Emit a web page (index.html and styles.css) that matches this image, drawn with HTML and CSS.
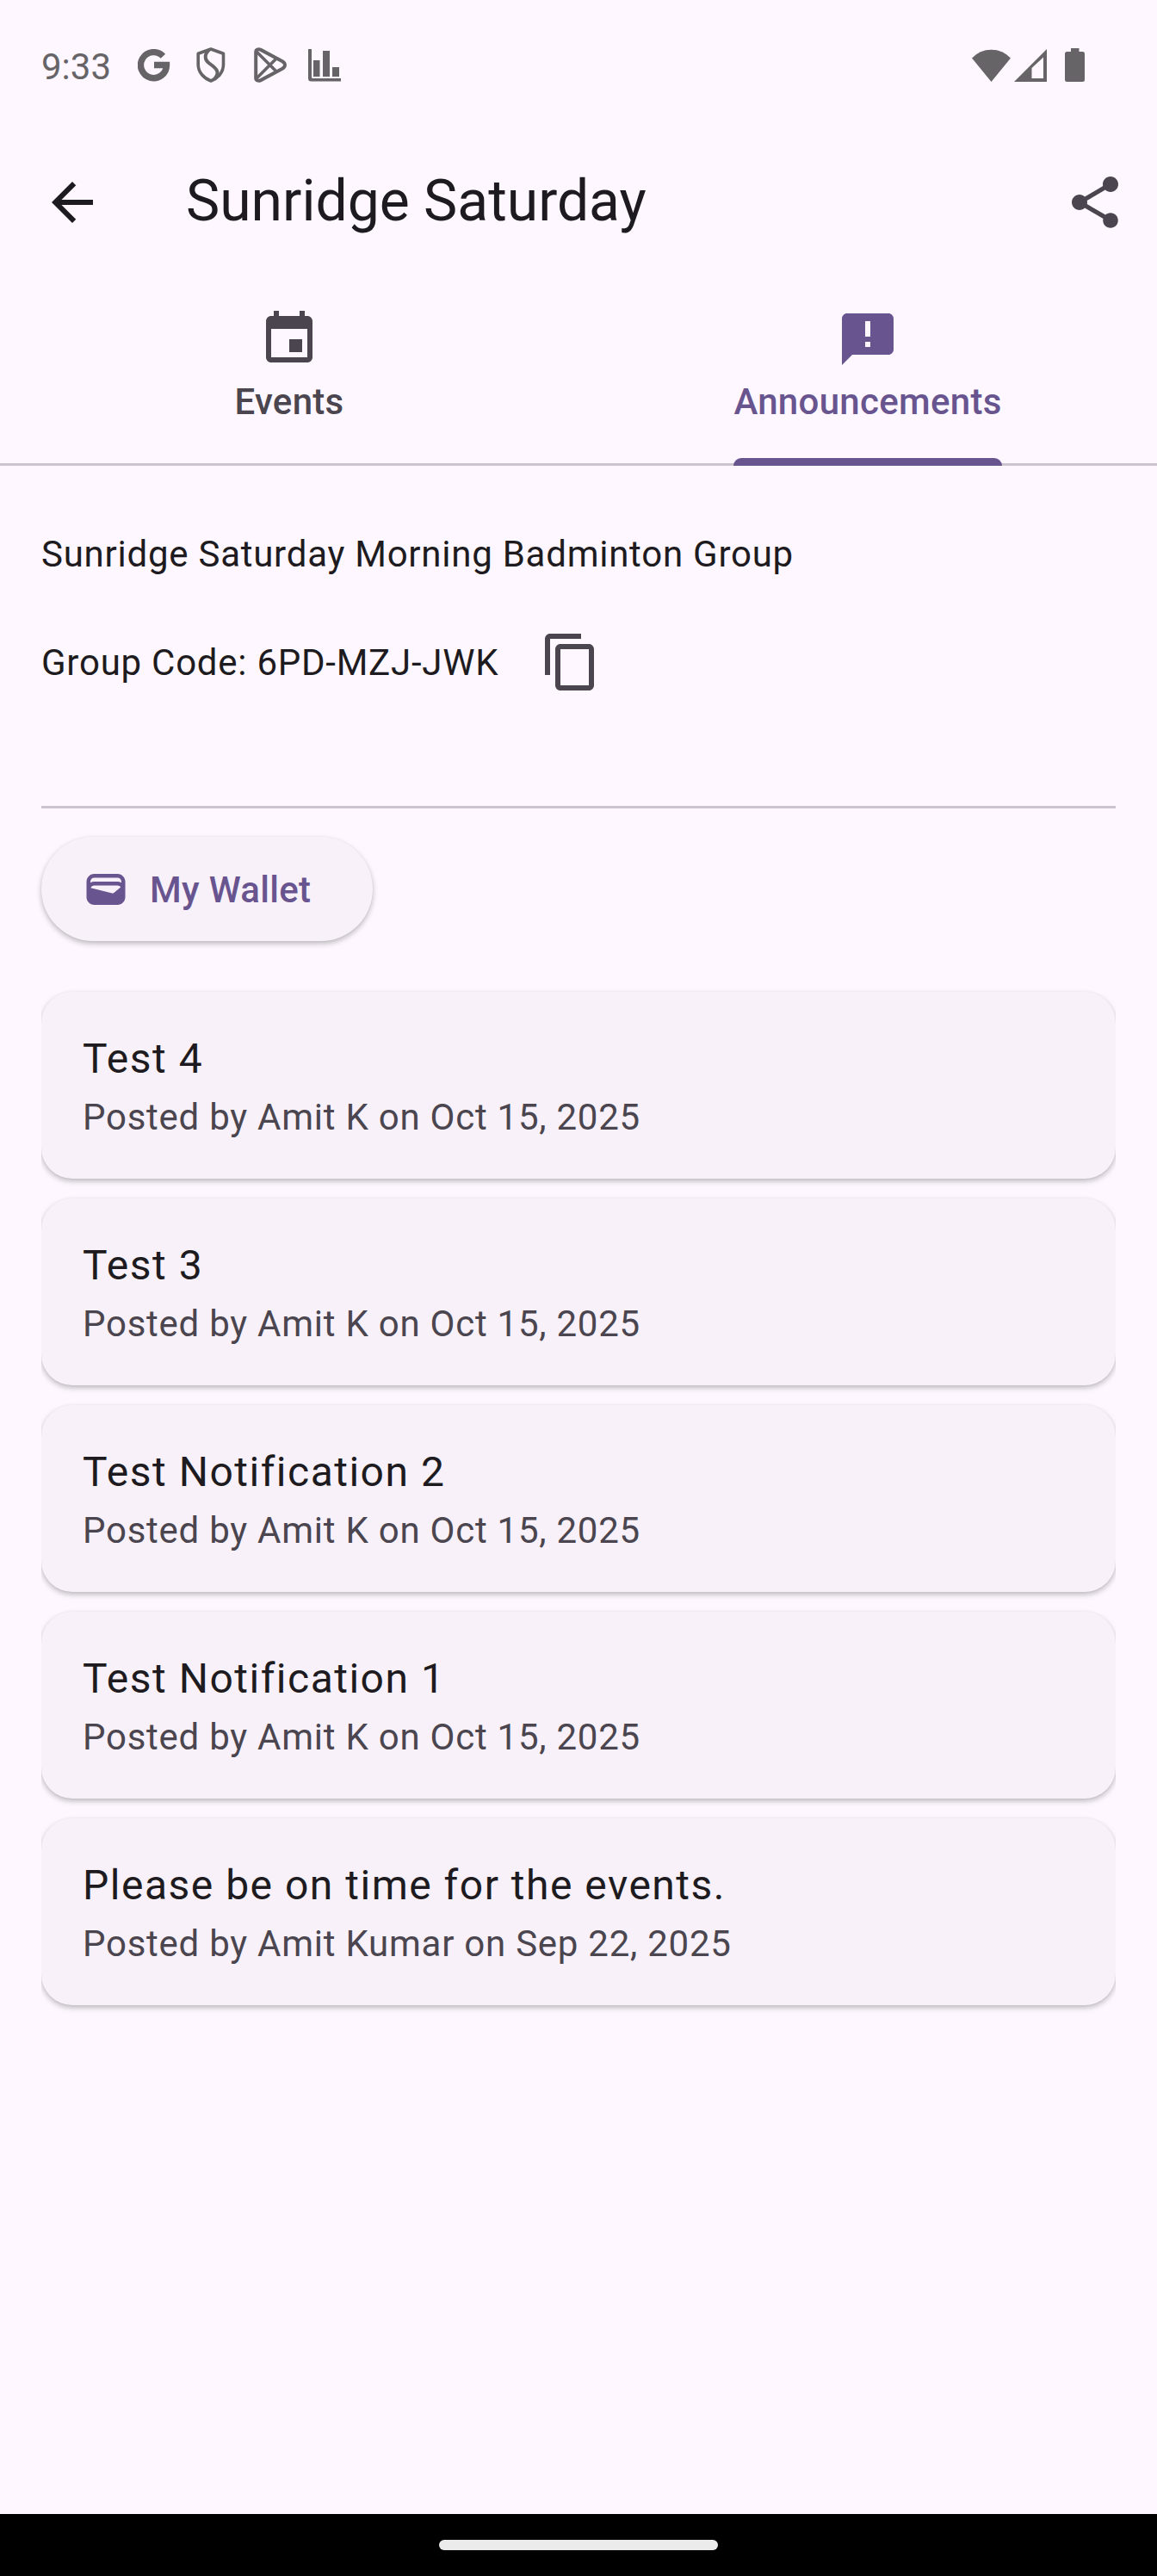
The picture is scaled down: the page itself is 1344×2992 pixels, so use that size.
FILE: index.html
```html
<!DOCTYPE html>
<html lang="en">
<head>
<meta charset="utf-8">
<title>Sunridge Saturday</title>
<link rel="stylesheet" href="styles.css">
</head>
<body>
<div class="screen">
  <header class="status-bar">
    <span class="clock">9:33</span>
    <div class="notifications">
      <svg class="glyph google" viewBox="0 0 38 38"><path d="M29.400 8.300A15 15 0 1 0 33.500 18.500H19" fill="none" stroke="currentColor" stroke-width="7.400"/></svg>
      <svg class="glyph shield" viewBox="0 0 34 41"><path d="M17 2 31.500 7.300V20C31.500 29 25 36 17 39 9 36 2.200 29 2.200 20V7.300Z" fill="none" stroke="currentColor" stroke-width="3.600" stroke-linejoin="round"/><path d="M15 3C9 8 9.500 14.500 15 18.500L19 21.500C26 27 26 31 21 37" fill="none" stroke="currentColor" stroke-width="4"/></svg>
      <svg class="glyph play" viewBox="0 0 38 41"><path d="M2.200 5.500C2.200 2.500 5 1.400 8 2.900L33 16.300C37 18.600 37 22.400 33 24.700L8 38.100C5 39.600 2.200 38.500 2.200 35.500Z" fill="none" stroke="currentColor" stroke-width="4"/><path d="M3 5 26.500 28.500M3 36 26.500 12.500" fill="none" stroke="currentColor" stroke-width="3.600"/></svg>
      <svg class="glyph chart" viewBox="0 0 38 38"><path d="M0 0H4V32.500Q4 34 5.500 34H38V37.500H3.500Q0 37.500 0 34ZM6 13H13.500V32H6ZM17 2H25V32H17ZM28 21H36V32H28Z" fill="currentColor"/></svg>
    </div>
    <div class="system">
      <svg class="glyph wifi" viewBox="0 0 45 38"><path d="M0 10.500Q9 .7 22.500 .7T45 10.500L22.500 38Z" fill="currentColor"/></svg>
      <svg class="glyph signal" viewBox="0 0 38 38"><path d="M38 0V38H0ZM34 9.500 20.500 22V34H34Z" fill="currentColor" fill-rule="evenodd"/></svg>
      <svg class="glyph battery" viewBox="0 0 23 39"><path d="M7 0H16.500V4H20.500Q23 4 23 6.500V36.500Q23 39 20.500 39H2.500Q0 39 0 36.500V6.500Q0 4 2.500 4H7Z" fill="currentColor"/></svg>
    </div>
  </header>

  <div class="app-bar">
    <svg class="icon back" viewBox="0 0 24 24"><path d="M20 11H7.830l5.590-5.590L12 4l-8 8 8 8 1.410-1.410L7.830 13H20v-2z"/></svg>
    <h1 class="title">Sunridge Saturday</h1>
    <svg class="icon share" viewBox="0 0 24 24"><path d="M18 16.080c-.76 0-1.440.3-1.960.77L8.910 12.700c.05-.23.09-.46.09-.7s-.04-.47-.09-.7l7.050-4.110c.54.5 1.250.81 2.040.81 1.660 0 3-1.340 3-3s-1.340-3-3-3-3 1.340-3 3c0 .24.04.47.09.7L8.040 9.810C7.500 9.310 6.790 9 6 9c-1.660 0-3 1.340-3 3s1.340 3 3 3c.79 0 1.500-.31 2.040-.81l7.120 4.160c-.05.21-.08.43-.08.65 0 1.610 1.310 2.920 2.920 2.920s2.920-1.310 2.920-2.920-1.310-2.920-2.920-2.920z"/></svg>
  </div>

  <nav class="tabs">
    <div class="tab">
      <svg class="icon" viewBox="0 0 24 24"><path d="M17 12h-5v5h5v-5zM16 1v2H8V1H6v2H5c-1.110 0-1.990.9-1.990 2L3 19c0 1.100.89 2 2 2h14c1.100 0 2-.9 2-2V5c0-1.100-.9-2-2-2h-1V1h-2zm3 18H5V8h14v11z"/></svg>
      <span class="tab-label">Events</span>
    </div>
    <div class="tab tab-active">
      <svg class="icon" viewBox="0 0 24 24"><path d="M20 2H4c-1.100 0-1.990.9-1.990 2L2 22l4-4h14c1.100 0 2-.9 2-2V4c0-1.100-.9-2-2-2zm-7 9h-2V5h2v6zm0 4h-2v-2h2v2z"/></svg>
      <span class="tab-label">Announcements</span>
    </div>
  </nav>

  <main class="content">
    <p class="group-name">Sunridge Saturday Morning Badminton Group</p>
    <div class="group-code">
      <span class="code-text">Group Code: 6PD-MZJ-JWK</span>
      <svg class="icon copy" viewBox="0 0 24 24"><path d="M16 1H4c-1.100 0-2 .9-2 2v14h2V3h12V1zm3 4H8c-1.100 0-2 .9-2 2v14c0 1.100.9 2 2 2h11c1.100 0 2-.9 2-2V7c0-1.100-.9-2-2-2zm0 16H8V7h11v14z"/></svg>
    </div>
    <hr class="divider">
    <button class="wallet">
      <svg class="wallet-icon" viewBox="0 0 24 24"><path d="M18 4H6C3.790 4 2 5.790 2 8v8c0 2.210 1.790 4 4 4h12c2.210 0 4-1.790 4-4V8c0-2.210-1.790-4-4-4zm-1.860 9.770c-.24.2-.57.28-.88.2L4.150 11.250C4.450 10.520 5.160 10 6 10h12c.67 0 1.260.34 1.630.84l-3.490 2.930zM6 6h12c1.100 0 2 .9 2 2v.55C19.410 8.210 18.730 8 18 8H6c-.73 0-1.410.21-2 .55V8c0-1.100.9-2 2-2z"/></svg>
      <span class="wallet-label">My Wallet</span>
    </button>
    <div class="list">
      <article class="card"><h2 class="card-title">Test 4</h2><p class="card-meta">Posted by Amit K on Oct 15, 2025</p></article>
      <article class="card"><h2 class="card-title">Test 3</h2><p class="card-meta">Posted by Amit K on Oct 15, 2025</p></article>
      <article class="card"><h2 class="card-title">Test Notification 2</h2><p class="card-meta">Posted by Amit K on Oct 15, 2025</p></article>
      <article class="card"><h2 class="card-title">Test Notification 1</h2><p class="card-meta">Posted by Amit K on Oct 15, 2025</p></article>
      <article class="card"><h2 class="card-title">Please be on time for the events.</h2><p class="card-meta">Posted by Amit Kumar on Sep 22, 2025</p></article>
    </div>
  </main>

  <footer class="nav-bar"><div class="handle"></div></footer>
</div>
</body>
</html>
```

FILE: styles.css
```css
* { box-sizing: border-box; margin: 0; padding: 0; }

body {
  background: #fef7ff;
  color: #1d1b20;
  font-family: Roboto, "Liberation Sans", sans-serif;
  font-size: 42px;
  line-height: 60px;
  letter-spacing: 0.75px;
}

.screen {
  display: flex;
  flex-direction: column;
  width: 1344px;
  height: 2992px;
  overflow: hidden;
}

svg { display: block; flex: none; }

.icon {
  width: 72px;
  height: 72px;
  fill: currentColor;
}

/* Status bar */
.status-bar {
  display: flex;
  align-items: center;
  height: 151px;
  padding: 0 84px 0 48px;
  color: #666467;
}

.clock {
  width: 112px;
  padding-top: 4px;
  letter-spacing: 0;
}

.notifications { display: flex; align-items: center; }
.system { display: flex; align-items: center; margin-left: auto; }

.google { width: 38px; height: 38px; }
.shield { width: 34px; height: 41px; margin-left: 30px; }
.play { width: 38px; height: 41px; margin-left: 33px; }
.chart { width: 38px; height: 38px; margin-left: 25px; }
.wifi { width: 45px; height: 38px; }
.signal { width: 38px; height: 38px; margin-left: 4px; }
.battery { width: 23px; height: 39px; margin-left: 21px; }

/* App bar */
.app-bar {
  display: flex;
  align-items: center;
  height: 168px;
  padding: 0 36px 0 48px;
}

.title {
  flex: 1;
  margin-left: 96px;
  padding-bottom: 3px;
  font-size: 66px;
  font-weight: 400;
  line-height: 84px;
  letter-spacing: 0;
}

.share, .copy { color: #4a454e; }

/* Tabs */
.tabs {
  display: flex;
  height: 222px;
  box-shadow: inset 0 -3px #ccc4cf;
}

.tab {
  flex: 1;
  display: flex;
  flex-direction: column;
  align-items: center;
  justify-content: space-between;
  padding-top: 39px;
  color: #4a454e;
}

.tab-label {
  position: relative;
  height: 104px;
  font-weight: 500;
  letter-spacing: 0.3px;
}

.tab-active { color: #68548e; }

.tab-active .tab-label::after {
  content: "";
  position: absolute;
  left: 0;
  right: 0;
  bottom: 0;
  height: 9px;
  border-radius: 9px 9px 0 0;
  background: #68548e;
}

/* Content */
.content {
  flex: 1;
  display: flex;
  flex-direction: column;
  align-items: flex-start;
  padding: 73px 48px 0;
}

.group-code {
  display: flex;
  align-items: center;
  gap: 48px;
  margin-top: 59px;
}

.code-text { padding-top: 2px; }

.divider {
  width: 100%;
  height: 3px;
  margin-top: 131px;
  border: 0;
  background: #ccc4cf;
}

.wallet {
  display: flex;
  align-items: center;
  gap: 24px;
  height: 121px;
  margin-top: 33px;
  padding: 1px 72px 0 48px;
  border: 0;
  border-radius: 61px;
  background: #f8f1fa;
  box-shadow: 0 3px 6px rgba(0, 0, 0, 0.26), 0 0 3px rgba(0, 0, 0, 0.03);
  color: #68548e;
  font: 500 42px/60px Roboto, "Liberation Sans", sans-serif;
  letter-spacing: 0.3px;
}

.wallet-icon { width: 54px; height: 54px; fill: currentColor; }
.wallet-label { padding-top: 2px; }

.list {
  display: flex;
  flex-direction: column;
  gap: 23px;
  width: 100%;
  margin-top: 47px;
  padding: 12px 0;
  overflow: hidden;
}

.card {
  height: 217px;
  padding: 42px 48px 0;
  border-radius: 36px;
  background: #f8f1fa;
  box-shadow: 0 3px 6px rgba(0, 0, 0, 0.26), 0 0 3px rgba(0, 0, 0, 0.03);
}

.card-title {
  font-size: 48px;
  font-weight: 400;
  line-height: 72px;
  letter-spacing: 1.5px;
}

.card-meta { margin-top: 2px; color: #4a454e; }

/* System navigation */
.nav-bar {
  height: 72px;
  padding-top: 30px;
  background: #000;
}

.handle {
  width: 324px;
  height: 12px;
  margin: 0 auto;
  border-radius: 6px;
  background: #ebebeb;
}
```
